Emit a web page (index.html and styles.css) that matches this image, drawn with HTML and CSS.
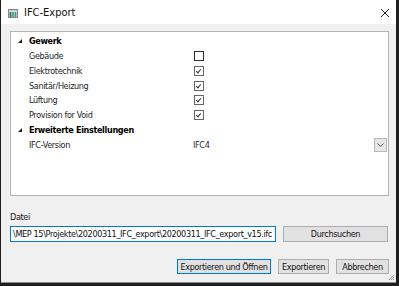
FILE: index.html
```html
<!DOCTYPE html>
<html lang="de">
<head>
  <meta charset="UTF-8">
  <title>IFC-Export</title>
  <link rel="stylesheet" href="styles.css">
</head>
<body>
  <div class="window">
    <div class="titlebar">
      <svg class="app-icon" width="10" height="9" viewBox="0 0 10 9">
        <rect x="0.5" y="0.5" width="9" height="8" fill="#fff" stroke="#8a8a8a"/>
        <rect x="1" y="1" width="8" height="1.5" fill="#b8c4d0"/>
        <rect x="1.5" y="3" width="2" height="5" fill="#2f6f6a"/>
        <rect x="4" y="3" width="2" height="5" fill="#58b04a"/>
        <rect x="6.5" y="3" width="2" height="5" fill="#4a86c8"/>
      </svg>
      <span class="title">IFC-Export</span>
      <svg class="close" width="10" height="10" viewBox="0 0 10 10">
        <path d="M1 1 L9 9 M9 1 L1 9" stroke="#222" stroke-width="1" fill="none"/>
      </svg>
    </div>

    <div class="content">
      <div class="grid">
        <div class="row cat"><span class="arrow"></span><span class="name">Gewerk</span></div>
        <div class="row"><span class="label">Gebäude</span><span class="value"><span class="box"></span></span></div>
        <div class="row"><span class="label">Elektrotechnik</span><span class="value"><span class="box checked"></span></span></div>
        <div class="row"><span class="label">Sanitär/Heizung</span><span class="value"><span class="box checked"></span></span></div>
        <div class="row"><span class="label">Lüftung</span><span class="value"><span class="box checked"></span></span></div>
        <div class="row"><span class="label">Provision for Void</span><span class="value"><span class="box checked"></span></span></div>
        <div class="row cat"><span class="arrow"></span><span class="name">Erweiterte Einstellungen</span></div>
        <div class="row"><span class="label">IFC-Version</span><span class="value combo"><span class="ifc">IFC4</span><span class="drop">
          <svg width="7" height="4" viewBox="0 0 7 4"><path d="M0.5 0.5 L3.5 3.5 L6.5 0.5" stroke="#555" fill="none"/></svg>
        </span></span></div>
      </div>

      <div class="file">
        <div class="file-label">Datei</div>
        <div class="file-row">
          <div class="path"><span>\MEP 15\Projekte\20200311_IFC_export\20200311_IFC_export_v15.ifc</span></div>
          <button class="btn browse">Durchsuchen</button>
        </div>
      </div>

      <div class="actions">
        <button class="btn default">Exportieren und Öffnen</button>
        <button class="btn">Exportieren</button>
        <button class="btn">Abbrechen</button>
      </div>
    </div>

    <svg class="grip" width="7" height="7" viewBox="0 0 7 7">
      <path d="M6 1 L1 6 M6 3 L3 6 M6 5 L5 6" stroke="#a0a0a0" stroke-width="1"/>
    </svg>
  </div>
</body>
</html>
```

FILE: styles.css
```css
html * {
  font-family: "Liberation Sans Narrow", "DejaVu Sans Condensed", "Liberation Sans", sans-serif;
}

body {
  margin: 0;
  width: 399px;
  height: 286px;
  overflow: hidden;
  background: #1e1e1e;
}

.window {
  position: relative;
  margin-left: 1px;
  width: 395px;
  height: 282px;
  background: #f0f0f0;
  border-bottom: 1px solid #8c8c8c;
  display: flex;
  flex-direction: column;
}

.titlebar {
  height: 24px;
  background: #fff;
  display: flex;
  align-items: center;
  padding: 0 5px 0 7px;
  flex-shrink: 0;
}

.app-icon {
  margin-top: 2px;
}

.title {
  margin-left: 6px;
  font-size: 11px;
  color: #111;
  flex: 1;
  margin-top: 1px;
}

.close {
  margin-right: 1px;
  margin-top: 1px;
}

.content {
  padding: 7px 7px 0 9px;
  display: flex;
  flex-direction: column;
  letter-spacing: -0.35px;
}

.grid {
  height: 161px;
  background: #fff;
  border: 1px solid #b4b4b4;
  padding-top: 2px;
  box-sizing: content-box;
}

.row {
  display: grid;
  grid-template-columns: 18px 164px 1fr;
  align-items: center;
  height: 14.75px;
  font-size: 9px;
  color: #1e1e1e;
}

.row .label {
  grid-column: 2;
}

.row .value {
  grid-column: 3;
  display: flex;
  align-items: center;
}

.cat .name {
  grid-column: 2 / 4;
  font-weight: bold;
  color: #000;
}

.arrow {
  justify-self: start;
  margin-left: 7px;
  width: 0;
  height: 0;
  border-top: 4px solid transparent;
  border-right: 4px solid #222;
}

.box {
  width: 8px;
  height: 8px;
  border: 1px solid #333;
  background: #fff;
  margin-left: 1px;
  position: relative;
}

.box.checked {
  border-color: #666;
}

.box.checked::after {
  content: "";
  position: absolute;
  left: 2px;
  top: 1px;
  width: 2px;
  height: 4px;
  border-right: 1px solid #333;
  border-bottom: 1px solid #333;
  transform: rotate(40deg);
}

.combo {
  justify-content: space-between;
}

.ifc {
  color: #2a2a44;
}

.drop {
  width: 11px;
  height: 12px;
  margin-right: 1px;
  background: #e6e6e6;
  border: 1px solid #b9b9b9;
  display: flex;
  align-items: center;
  justify-content: center;
}

.file {
  margin-top: 16px;
}

.file-label {
  font-size: 9px;
  color: #111;
  height: 11px;
  line-height: 11px;
}

.file-row {
  margin-top: 3px;
  display: flex;
  gap: 7px;
}

.path {
  width: 266px;
  height: 16px;
  box-sizing: border-box;
  border: 1px solid #0078d7;
  background: #fff;
  overflow: hidden;
  display: flex;
  align-items: center;
  padding: 0 2px 0 2px;
  white-space: nowrap;
  font-size: 9px;
  letter-spacing: -0.35px;
  color: #111;
}

.btn {
  height: 16px;
  box-sizing: border-box;
  border: 1px solid #adadad;
  background: #e1e1e1;
  font-size: 9px;
  letter-spacing: -0.35px;
  white-space: nowrap;
  color: #111;
  padding: 0;
  margin: 0;
}

.browse {
  width: 105px;
}

.actions {
  margin-top: 17px;
  display: flex;
  justify-content: flex-end;
  gap: 7px;
}

.actions .btn {
  height: 15px;
}

.actions .default {
  width: 94px;
  border-color: #0078d7;
}

.actions .btn:nth-child(2) {
  width: 51px;
}

.actions .btn:nth-child(3) {
  width: 53px;
}

.grip {
  position: absolute;
  right: 1px;
  bottom: 1px;
}
```
